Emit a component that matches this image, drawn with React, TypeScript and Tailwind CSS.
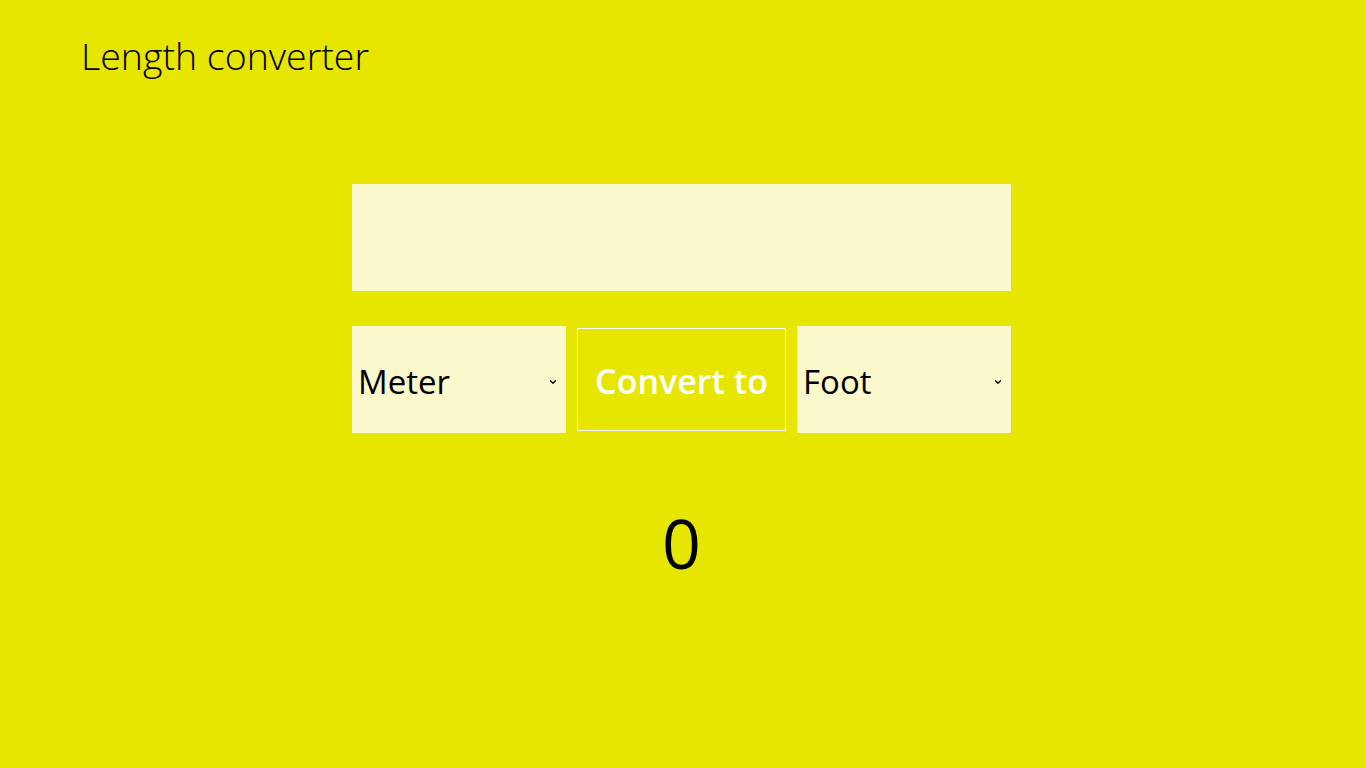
import { ChevronDown } from 'lucide-react';

function UnitSelect({ label }: { label: string }) {
  return (
    <div className="w-[214px] h-[107px] bg-[#fbf8cc] flex items-center justify-between pl-[6px] pr-[8px] pt-[4px]">
      <span className="text-[33px] text-black">{label}</span>
      <ChevronDown className="w-[10px] h-[10px] text-black" strokeWidth={3} />
    </div>
  );
}

export default function App() {
  return (
    <div
      className="w-full h-[768px] bg-[#e6e600] overflow-hidden"
      style={{ fontFamily: '"Open Sans", "Noto Sans", sans-serif' }}
    >
      {/* 제목 */}
      <h1 className="pl-[81px] pt-[32px] text-[37.5px] font-light text-black leading-[48px]">
        Length converter
      </h1>

      <div className="pl-[352px] pt-[104px] flex flex-col">
        {/* 입력 */}
        <div className="w-[659px] h-[107px] bg-[#fbf8cc]" />

        <div className="mt-[35px] flex items-center gap-[11px]">
          <UnitSelect label="Meter" />
          <button className="w-[209px] h-[103px] border border-white text-white text-[34px] font-semibold pt-[4px]">
            Convert to
          </button>
          <UnitSelect label="Foot" />
        </div>

        {/* 결과 */}
        <div className="w-[659px] mt-[76px] text-center text-[68px] text-black leading-none">0</div>
      </div>
    </div>
  );
}
